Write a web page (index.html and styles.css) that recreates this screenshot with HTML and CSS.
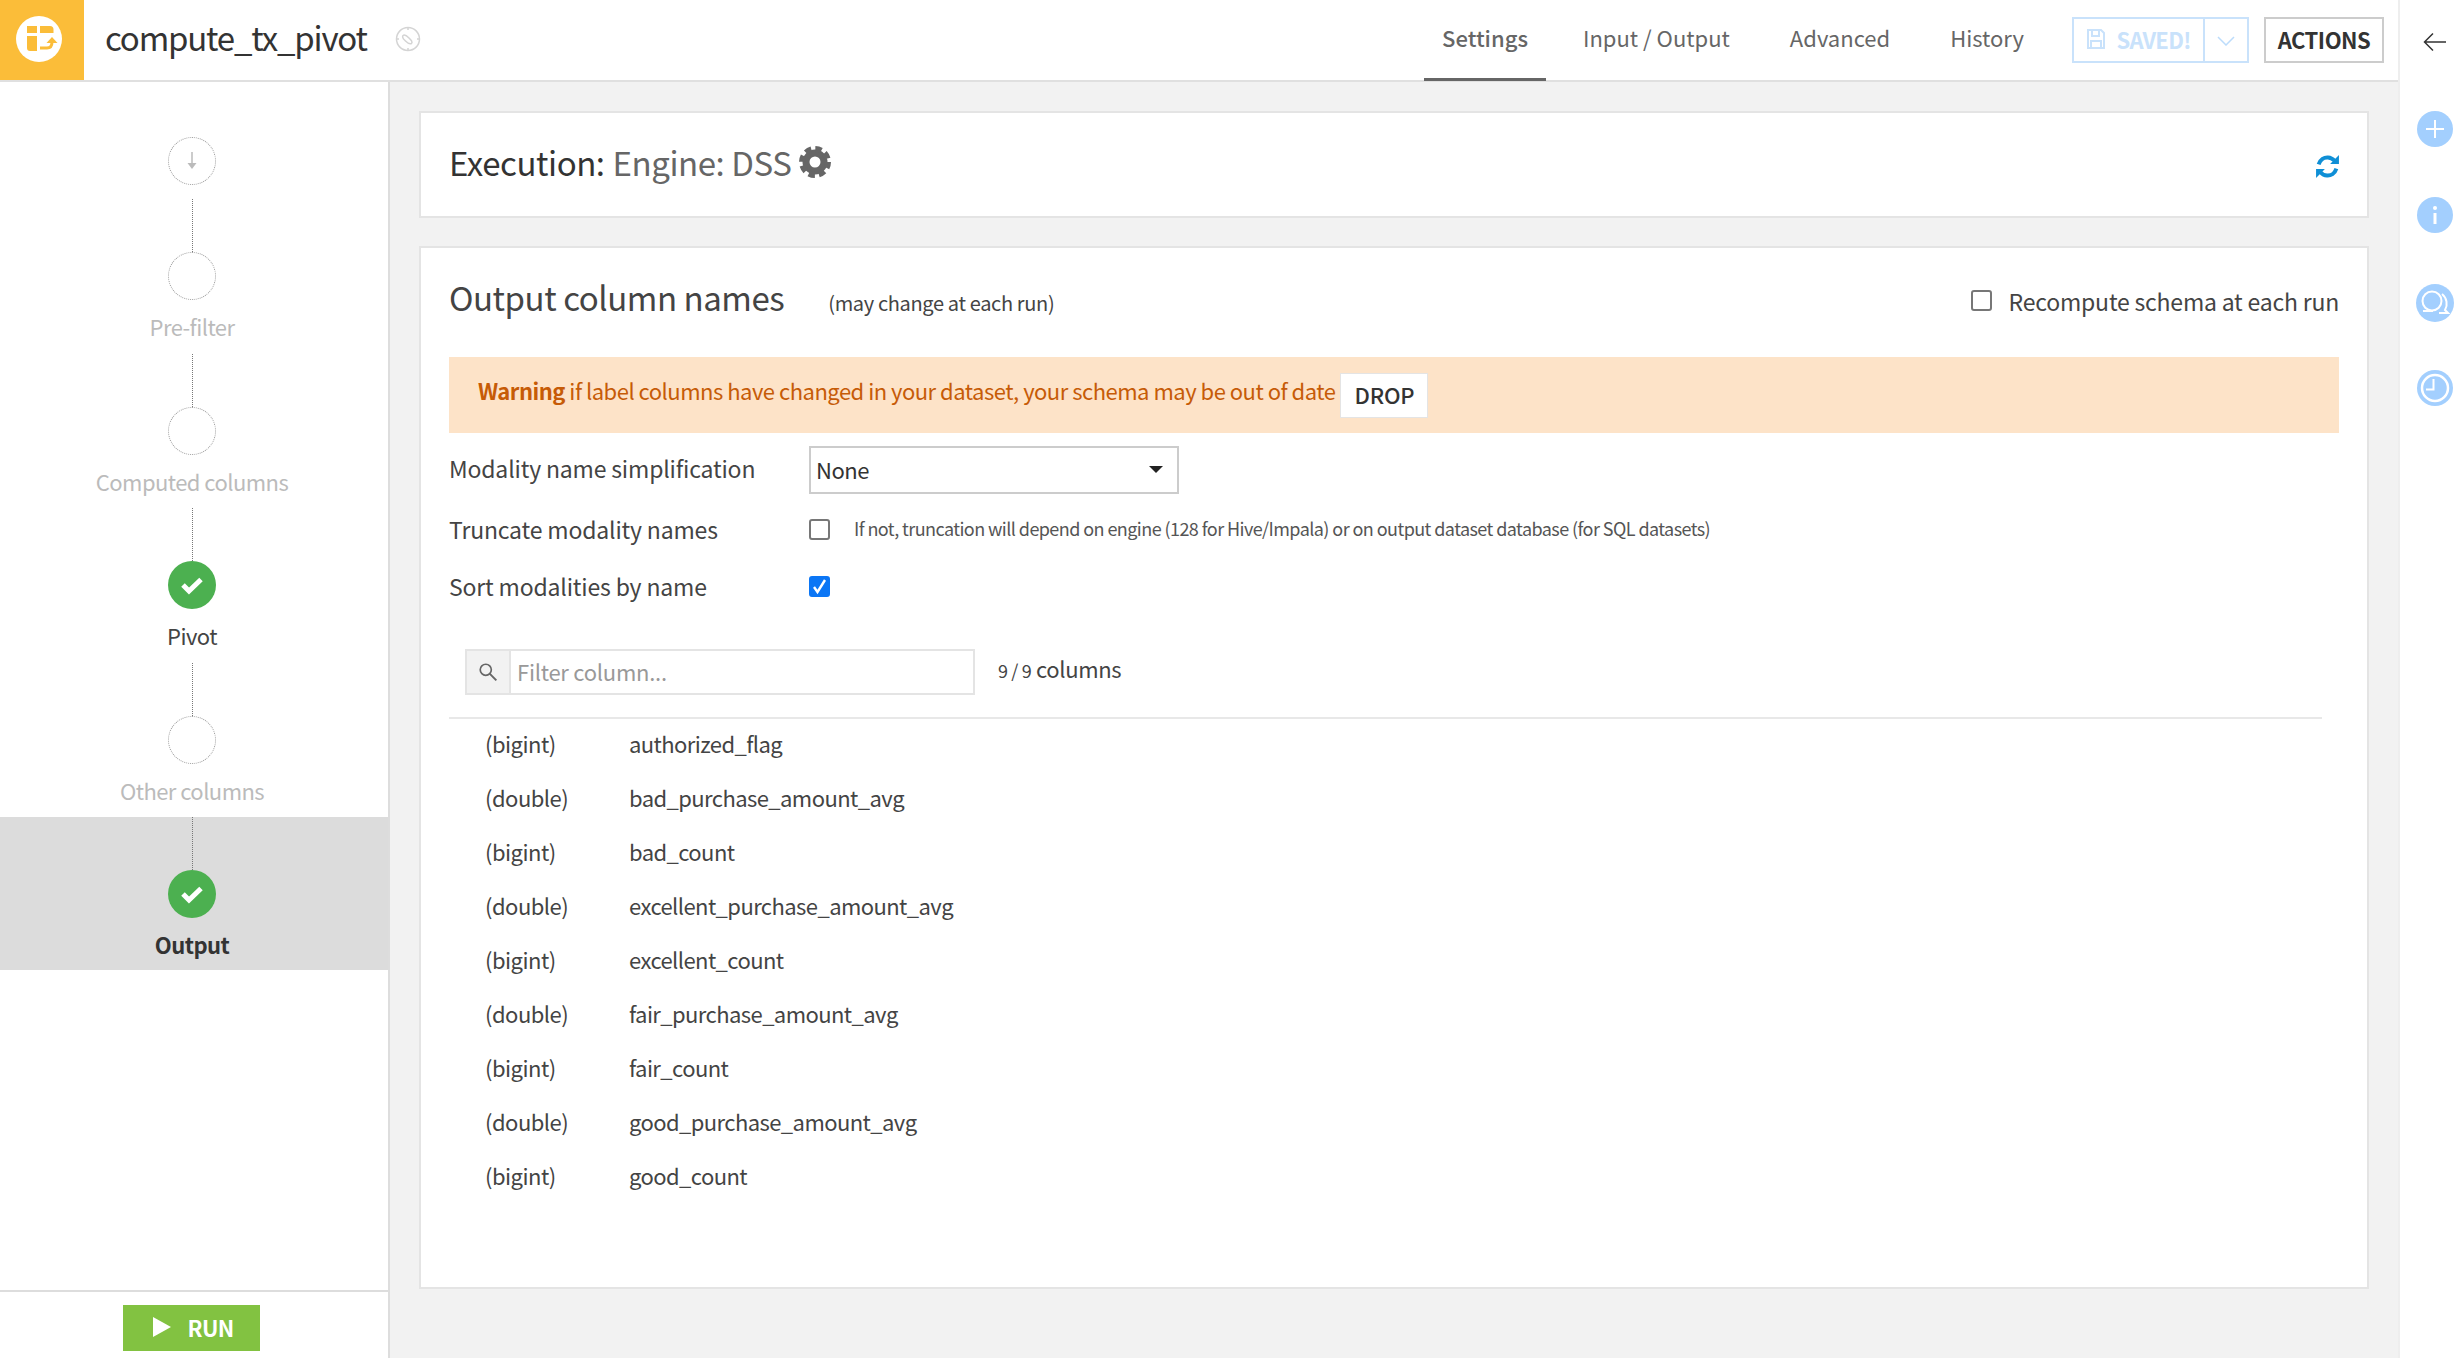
FILE: index.html
```html
<!DOCTYPE html>
<html lang="en">
<head>
  <meta charset="UTF-8">
  <title>compute_tx_pivot</title>
  <link rel="stylesheet" href="styles.css">
</head>
<body>
<div class="app">
  <div class="workspace">

    <header class="topbar">
      <div class="logo">
        <svg width="46" height="46" viewBox="0 0 46 46">
          <circle cx="23" cy="23" r="23" fill="#fff"/>
          <path d="M11 10h10v7H11z M24 10h10a3.500 3.500 0 0 1 3.500 3.500V17H24z M11 20h10v15h-7a3 3 0 0 1-3-3z M11 13a3 3 0 0 1 3-3h7v7H11z" fill="#fbbd39"/>
          <path d="M24 32h7c3 0 5-2 5-6" fill="none" stroke="#fbbd39" stroke-width="3"/>
          <path d="M30.500 27l5.500-6 5.500 6z" fill="#fbbd39"/>
        </svg>
      </div>
      <h1 class="recipe-name">compute_tx_pivot</h1>
      <svg class="compass" width="26" height="26" viewBox="0 0 26 26">
        <circle cx="13" cy="13" r="11.500" fill="none" stroke="#d4d4d4" stroke-width="1.500"/>
        <path d="M13 1v3M13 22v3M1 13h3M22 13h3" stroke="#d4d4d4" stroke-width="1.500"/>
        <path d="M8 9.500c2-1.500 4 .5 6 2.500s4 4 2.500 5.500c-2 1-4-.5-6-2.500s-4-3.500-2.500-5.500z" fill="none" stroke="#d4d4d4" stroke-width="1.500"/>
      </svg>
      <nav class="tabs">
        <a class="tab active">Settings</a>
        <a class="tab">Input / Output</a>
        <a class="tab">Advanced</a>
        <a class="tab">History</a>
      </nav>
      <div class="save-group">
        <button class="btn-saved">
          <svg width="20" height="22" viewBox="0 0 20 22">
            <path d="M2 2h13l3 3v15H2z M6 2v6h7V2 M5 20v-7h10v7" fill="none" stroke="#c9e2fb" stroke-width="2"/>
          </svg>
          SAVED!
        </button>
        <button class="btn-caret">
          <svg width="18" height="10" viewBox="0 0 18 10"><path d="M1 1l8 8 8-8" fill="none" stroke="#bcdcfb" stroke-width="1.500"/></svg>
        </button>
      </div>
      <button class="btn-actions">ACTIONS</button>
    </header>

    <div class="content">
      <aside class="sidebar">
        <div class="steps">
          <div class="step first">
            <div class="dot">
              <svg width="14" height="20" viewBox="0 0 14 20"><path d="M7 1v13" stroke="#bbb" stroke-width="1.500"/><path d="M2.500 12h9L7 18z" fill="#bbb"/></svg>
            </div>
          </div>
          <div class="step muted"><div class="line"></div><div class="dot"></div><div class="step-label">Pre-filter</div></div>
          <div class="step muted"><div class="line"></div><div class="dot"></div><div class="step-label">Computed columns</div></div>
          <div class="step"><div class="line"></div>
            <div class="dot ok"><svg width="24" height="20" viewBox="0 0 24 20"><path d="M3 10l6 6L21 4.500" fill="none" stroke="#fff" stroke-width="5"/></svg></div>
            <div class="step-label">Pivot</div></div>
          <div class="step muted"><div class="line"></div><div class="dot"></div><div class="step-label">Other columns</div></div>
          <div class="step current"><div class="line"></div>
            <div class="dot ok"><svg width="24" height="20" viewBox="0 0 24 20"><path d="M3 10l6 6L21 4.500" fill="none" stroke="#fff" stroke-width="5"/></svg></div>
            <div class="step-label">Output</div></div>
        </div>
        <div class="run-bar">
          <button class="btn-run">
            <svg width="20" height="22" viewBox="0 0 20 22"><path d="M1 1l18 10L1 21z" fill="#fff"/></svg>
            RUN
          </button>
        </div>
      </aside>

      <main class="main">
        <section class="card card-engine">
          <h2 class="engine-title">Execution: <span class="engine-name">Engine: DSS</span>
            <svg class="gear" width="32" height="32" viewBox="0 0 32 32">
              <circle cx="16" cy="16" r="9" fill="none" stroke="#666" stroke-width="7"/>
              <circle cx="16" cy="16" r="13" fill="none" stroke="#666" stroke-width="6" stroke-dasharray="6.200 4"/>
            </svg>
          </h2>
          <svg class="refresh" width="25" height="25" viewBox="0 0 24 24">
            <path d="M3.500 10C5 5 9 3 12.500 3.300c2.500.2 4.500 1.300 6 3" fill="none" stroke="#0f8fd6" stroke-width="3.800"/>
            <path d="M23 1v8.500h-8.500z" fill="#0f8fd6"/>
            <path d="M20.500 14c-1.500 5-5.500 7-9 6.700-2.500-.2-4.500-1.300-6-3" fill="none" stroke="#0f8fd6" stroke-width="3.800"/>
            <path d="M1 23v-8.500h8.500z" fill="#0f8fd6"/>
          </svg>
        </section>

        <section class="card card-output">
          <div class="output-head">
            <h2 class="output-title">Output column names</h2>
            <span class="output-note">(may change at each run)</span>
            <label class="recompute"><span class="check"></span><span class="recompute-text">Recompute schema at each run</span></label>
          </div>

          <div class="warning">
            <span><strong>Warning</strong> if label columns have changed in your dataset, your schema may be out of date</span>
            <button class="btn-drop">DROP</button>
          </div>

          <div class="form-row row-select">
            <label class="form-label">Modality name simplification</label>
            <div class="select">None<span class="select-caret"></span></div>
          </div>
          <div class="form-row row-truncate">
            <label class="form-label">Truncate modality names</label>
            <span class="check"></span>
            <span class="hint">If not, truncation will depend on engine (128 for Hive/Impala) or on output dataset database (for SQL datasets)</span>
          </div>
          <div class="form-row row-sort">
            <label class="form-label">Sort modalities by name</label>
            <span class="check checked">
              <svg width="15" height="17" viewBox="0 0 15 17"><path d="M2 9l3.500 5L13 2" fill="none" stroke="#fff" stroke-width="2.400"/></svg>
            </span>
          </div>

          <div class="filter-bar">
            <div class="filter">
              <span class="filter-icon">
                <svg width="20" height="20" viewBox="0 0 18 18"><circle cx="7" cy="7" r="5" fill="none" stroke="#666" stroke-width="1.500"/><path d="M10.500 10.500l6 6" stroke="#666" stroke-width="1.800"/></svg>
              </span>
              <span class="filter-input">Filter column...</span>
            </div>
            <span class="count"><small>9 / 9</small> columns</span>
          </div>

          <ul class="columns">
            <li><span class="col-type">(bigint)</span><span class="col-name">authorized_flag</span></li>
            <li><span class="col-type">(double)</span><span class="col-name">bad_purchase_amount_avg</span></li>
            <li><span class="col-type">(bigint)</span><span class="col-name">bad_count</span></li>
            <li><span class="col-type">(double)</span><span class="col-name">excellent_purchase_amount_avg</span></li>
            <li><span class="col-type">(bigint)</span><span class="col-name">excellent_count</span></li>
            <li><span class="col-type">(double)</span><span class="col-name">fair_purchase_amount_avg</span></li>
            <li><span class="col-type">(bigint)</span><span class="col-name">fair_count</span></li>
            <li><span class="col-type">(double)</span><span class="col-name">good_purchase_amount_avg</span></li>
            <li><span class="col-type">(bigint)</span><span class="col-name">good_count</span></li>
          </ul>
        </section>
      </main>
    </div>
  </div>

  <aside class="rail">
    <svg class="rail-back" width="24" height="20" viewBox="0 0 24 20"><path d="M23 10H2M10 1.500L1.500 10l8.500 8.500" fill="none" stroke="#333" stroke-width="1.500"/></svg>
    <div class="rail-item">
      <svg width="36" height="36" viewBox="0 0 36 36"><circle cx="18" cy="18" r="18" fill="#a3cffe"/><path d="M18 9v18M9 18h18" stroke="#fff" stroke-width="2"/></svg>
    </div>
    <div class="rail-item">
      <svg width="36" height="36" viewBox="0 0 36 36"><circle cx="18" cy="18" r="18" fill="#a3cffe"/><circle cx="18" cy="11" r="2" fill="#fff"/><path d="M18 16v11" stroke="#fff" stroke-width="3"/></svg>
    </div>
    <div class="rail-item">
      <svg width="38" height="38" viewBox="0 0 38 38"><circle cx="19" cy="19" r="19" fill="#a3cffe"/><circle cx="16" cy="17" r="9.500" fill="none" stroke="#fff" stroke-width="2"/><path d="M7 27h10M26 10c5 4 6 11 3 16l3 3h-9" fill="none" stroke="#fff" stroke-width="2"/></svg>
    </div>
    <div class="rail-item">
      <svg width="36" height="36" viewBox="0 0 36 36"><circle cx="18" cy="18" r="18" fill="#a3cffe"/><circle cx="18" cy="18" r="13" fill="none" stroke="#fff" stroke-width="2.500"/><path d="M16.500 9v10.500H9" fill="none" stroke="#fff" stroke-width="2"/></svg>
    </div>
  </aside>
</div>
</body>
</html>
```

FILE: styles.css
```css
* {
  box-sizing: border-box;
}

html, body {
  margin: 0;
  height: 100%;
  overflow: hidden;
}

body {
  font-family: "Noto Sans CJK JP", "Noto Sans", sans-serif;
  font-size: 22px;
  line-height: 30px;
  letter-spacing: -0.5px;
  color: #444;
  background: #fff;
}

button {
  font-family: inherit;
  cursor: pointer;
  padding: 0;
}

h1, h2 {
  margin: 0;
  font-weight: 400;
}

.app {
  display: flex;
  height: 1358px;
}

.workspace {
  flex: 1;
  display: flex;
  flex-direction: column;
  min-width: 0;
}

/* top bar */
.topbar {
  height: 82px;
  display: flex;
  align-items: center;
  border-bottom: 2px solid #e0e0e0;
  flex-shrink: 0;
}

.logo {
  width: 84px;
  height: 80px;
  background: #fbbd39;
  display: flex;
  align-items: center;
  justify-content: center;
  padding-right: 6px;
  padding-bottom: 2px;
}

.recipe-name {
  margin-left: 21px;
  padding-bottom: 6px;
  font-size: 33px;
  line-height: 40px;
  letter-spacing: -1.2px;
  color: #333;
}

.compass {
  margin-left: 28px;
  margin-top: -2px;
}

.tabs {
  margin-left: auto;
  display: flex;
  height: 80px;
  margin-right: 30px;
}

.tab {
  padding: 0 18px;
  margin-left: 24px;
  font-size: 22px;
  line-height: 75px;
  letter-spacing: 0;
  color: #666;
}

.tab.active {
  font-weight: 500;
  border-bottom: 3px solid #666;
  height: 81px;
  margin-right: -5px;
}

.save-group {
  display: flex;
  height: 46px;
}

.btn-saved {
  width: 133px;
  border: 2px solid #c9e2fb;
  background: #fff;
  color: #c9e2fb;
  font-size: 22px;
  font-weight: 700;
  letter-spacing: -0.7px;
  padding-bottom: 2px;
  display: flex;
  align-items: center;
  justify-content: center;
  gap: 10px;
}

.btn-caret {
  width: 44px;
  border: 2px solid #c9e2fb;
  border-left: none;
  background: #fff;
}

.btn-actions {
  width: 120px;
  height: 46px;
  margin-left: 15px;
  margin-right: 14px;
  border: 2px solid #ccc;
  background: #fff;
  color: #333;
  font-size: 22px;
  font-weight: 700;
  letter-spacing: -0.5px;
  padding-bottom: 3px;
}

/* left steps */
.content {
  flex: 1;
  display: flex;
  min-height: 0;
}

.sidebar {
  width: 390px;
  border-right: 2px solid #ddd;
  display: flex;
  flex-direction: column;
  flex-shrink: 0;
}

.steps {
  flex: 1;
  padding-top: 55px;
}

.step {
  height: 154.500px;
  padding-right: 4px;
  display: flex;
  flex-direction: column;
  align-items: center;
  text-align: center;
}

.step.first {
  height: 62px;
}

.step.current {
  height: 153px;
  background: #dcdcdc;
}

.line {
  height: 53px;
  border-left: 1px dotted #777;
}

.dot {
  width: 48px;
  height: 48px;
  border-radius: 50%;
  border: 1px dotted #999;
  display: flex;
  align-items: center;
  justify-content: center;
  flex-shrink: 0;
  background: #fff;
}

.dot.ok {
  background: #4cb050;
  border: none;
}

.step-label {
  margin-top: 11px;
  font-size: 22px;
  line-height: 30px;
  letter-spacing: -0.55px;
  color: #444;
}

.muted .step-label {
  color: #bbb;
}

.current .step-label {
  font-weight: 700;
  color: #333;
}

.run-bar {
  height: 68px;
  border-top: 2px solid #ddd;
  display: flex;
  justify-content: center;
  padding-top: 13px;
  padding-right: 5px;
}

.btn-run {
  width: 137px;
  height: 46px;
  border: none;
  background: #82c241;
  color: #fff;
  font-size: 22px;
  font-weight: 700;
  letter-spacing: -0.7px;
  padding-bottom: 2px;
  padding-left: 2px;
  display: flex;
  align-items: center;
  justify-content: center;
  gap: 16px;
}

/* main panel */
.main {
  flex: 1;
  background: #f2f2f2;
  padding: 29px 29px 0 29px;
  min-width: 0;
}

.card {
  background: #fff;
  border: 2px solid #e4e4e4;
}

.card-engine {
  height: 107px;
  padding: 0 28px;
  display: flex;
  align-items: center;
  justify-content: space-between;
}

.engine-title {
  font-size: 33px;
  line-height: 40px;
  letter-spacing: -0.45px;
  color: #333;
  padding-bottom: 5px;
  display: flex;
  align-items: center;
  gap: 8px;
}

.engine-name {
  color: #666;
  white-space: pre;
}

.gear {
  margin-top: -1px;
}

.refresh {
  margin-right: -1px;
  margin-top: 4px;
}

.card-output {
  height: 1043px;
  margin-top: 28px;
  padding: 0 28px;
}

.output-head {
  height: 109px;
  padding-bottom: 6px;
  display: flex;
  align-items: center;
}

.output-title {
  font-size: 33px;
  line-height: 40px;
  letter-spacing: -0.45px;
  color: #444;
  margin-top: -6px;
}

.output-note {
  margin-left: 44px;
  font-size: 20px;
  letter-spacing: -0.35px;
  color: #444;
  margin-top: 6px;
}

.recompute {
  margin-left: auto;
  margin-top: 2px;
  display: flex;
  align-items: center;
  gap: 17px;
  font-size: 23px;
  letter-spacing: -0.2px;
  color: #444;
}

.check {
  width: 21px;
  height: 21px;
  border: 2px solid #777;
  border-radius: 3px;
  display: inline-flex;
  align-items: center;
  justify-content: center;
  background: #fff;
  flex-shrink: 0;
}

.check.checked {
  background: #0b76f5;
  border-color: #0b76f5;
}

.warning {
  height: 76px;
  padding-left: 29px;
  background: #fde3c8;
  color: #c65b07;
  display: flex;
  align-items: center;
  gap: 5px;
}

.warning span {
  margin-top: -10px;
}

.btn-drop {
  width: 88px;
  height: 45px;
  border: 1px solid #e4e4e4;
  background: #fff;
  color: #333;
  font-size: 22px;
  font-weight: 500;
  letter-spacing: -0.2px;
  padding-bottom: 2px;
}

.form-row {
  display: flex;
  align-items: center;
}

.form-label {
  width: 360px;
  font-size: 23px;
  letter-spacing: -0.17px;
  padding-bottom: 5px;
  color: #444;
  flex-shrink: 0;
}

.row-select {
  margin-top: 13px;
  height: 48px;
}

.row-truncate {
  margin-top: 11px;
  height: 48px;
}

.row-sort {
  margin-top: 9px;
  height: 48px;
}

.row-truncate .form-label, .row-sort .form-label {
  padding-bottom: 0;
}

.select {
  width: 370px;
  height: 48px;
  border: 2px solid #ccc;
  background: #fff;
  padding: 0 7px 2px 5px;
  line-height: 44px;
  color: #333;
  display: flex;
  align-items: center;
  justify-content: space-between;
}

.select-caret {
  width: 0;
  height: 0;
  margin-right: 7px;
  border-left: 7px solid transparent;
  border-right: 7px solid transparent;
  border-top: 7px solid #222;
}

.row-truncate .check, .row-sort .check {
  margin-right: 24px;
}

.hint {
  font-size: 18px;
  letter-spacing: -0.57px;
  padding-bottom: 3px;
  color: #555;
}

.filter-bar {
  margin-top: 39px;
  margin-left: 16px;
  display: flex;
  align-items: center;
}

.filter {
  width: 510px;
  height: 46px;
  border: 2px solid #e4e4e4;
  display: flex;
}

.filter-icon {
  width: 44px;
  background: #f2f2f2;
  border-right: 2px solid #e4e4e4;
  display: flex;
  align-items: center;
  justify-content: center;
}

.filter-input {
  padding-left: 6px;
  line-height: 40px;
  letter-spacing: -0.25px;
  color: #999;
}

.count {
  margin-left: 23px;
  margin-top: -6px;
  letter-spacing: -0.35px;
  color: #444;
}

.count small {
  font-size: 18px;
}

.columns {
  list-style: none;
  margin: 22px 17px 0 0;
  padding: 0;
  border-top: 2px solid #e8e8e8;
}

.columns li {
  height: 54px;
  padding-left: 36px;
  padding-bottom: 6px;
  display: flex;
  align-items: center;
  color: #444;
}

.col-type {
  width: 144px;
}

.col-name {
  letter-spacing: -0.58px;
}

/* right rail */
.rail {
  width: 66px;
  flex-shrink: 0;
  border-left: 2px solid #eee;
  padding-left: 6px;
  display: flex;
  flex-direction: column;
  align-items: center;
}

.rail-back {
  margin-top: 32px;
  margin-bottom: 59px;
}

.rail-item {
  height: 86.300px;
  display: flex;
  align-items: flex-start;
}
```
